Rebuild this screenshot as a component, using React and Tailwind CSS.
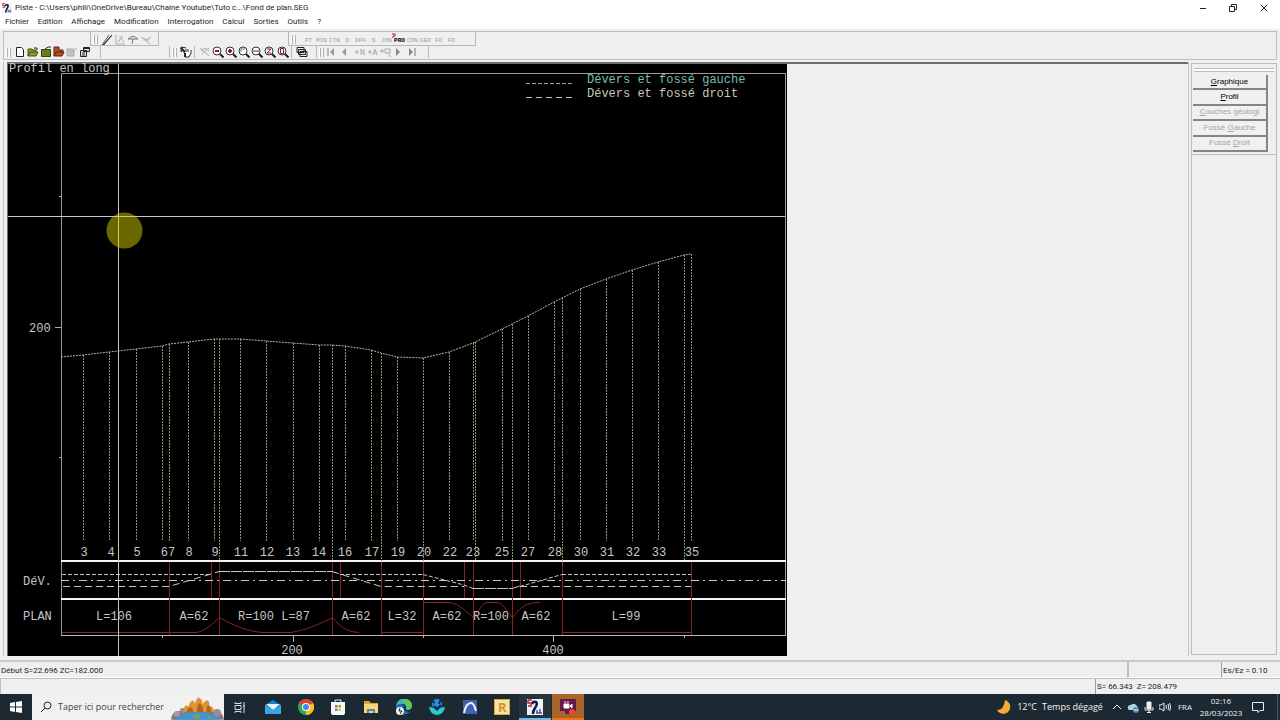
import React from 'react'

const menus = ['Fichier', 'Edition', 'Affichage', 'Modification', 'Interrogation', 'Calcul', 'Sorties', 'Outils', '?'];

const codes = ['PT', 'MIN', 'CTN', 'D', 'DPA', 'S', 'JON', 'PRO', 'CON', 'GEO', 'FO', 'FD'];

// x, y of the ground line at each cross section
const ground = [
  [83, 355], [109, 352], [136, 349], [162, 346], [169, 344], [188, 342], [214, 339], [219, 339],
  [240, 339], [266, 341], [293, 343], [319, 345], [332, 345], [345, 346], [371, 350], [381, 353],
  [397, 357], [423, 358], [449, 352], [473, 343], [475, 342], [502, 329], [512, 324], [528, 316],
  [554, 302], [562, 298], [580, 289], [606, 279], [632, 270], [658, 262], [684, 255], [691, 254],
];

// sections whose line goes down to the frame
const longSections = [219, 332, 381, 423, 475, 512, 562, 684];

const sectionLabels = [
  ['3', 84], ['4', 111], ['5', 137], ['67', 168], ['8', 189], ['9', 215], ['11', 241], ['12', 267],
  ['13', 293], ['14', 319], ['16', 345], ['17', 372], ['19', 398], ['20', 424], ['22', 450],
  ['23', 473], ['25', 502], ['27', 528], ['28', 555], ['30', 581], ['31', 607], ['32', 633],
  ['33', 659], ['35', 692],
];

const planLabels = [
  ['L=106', 114], ['A=62', 194], ['R=100 L=87', 274], ['A=62', 356], ['L=32', 402],
  ['A=62', 447], ['R=100', 491], ['A=62', 536], ['L=99', 626],
];

function Profile() {
  return (
    <svg
      viewBox="8 64 779 592"
      className="h-full w-auto shrink-0 overflow-visible bg-black font-['Liberation_Mono','Courier_New',monospace] text-[12px]"
      role="img"
      aria-label="Profil en long"
    >
      <g fill="none" shapeRendering="crispEdges">
        <path d="M61.5 636V73.5H785.5V636" stroke="#9a9a9a" />
        <path d="M61 635.5H786" stroke="#b8b8b8" />
        <path d="M61 561H786M61 599H786" stroke="#f4f4f4" strokeWidth="2" />
        <path d="M55 327.5H61M293.5 636V642M553.5 636V642M162.5 636V638M423.5 636V638M684.5 636V638M59 196.5H61M59 457.5H61" stroke="#b0b0b0" />
      </g>

      <g fill="none" stroke="#789c6a" strokeDasharray="2 1" shapeRendering="crispEdges">
        {ground.map(([x, y]) => (
          <path key={x} d={`M${x + 0.5} ${y}V${longSections.includes(x) ? 561 : 541}`} />
        ))}
      </g>
      <polyline
        points={'61,357 ' + ground.map((p) => p.join(',')).join(' ')}
        fill="none" stroke="#acbca0" strokeDasharray="2 1"
      />

      <g fill="none" stroke="#8c2222">
        <path d="M169.5 562V635M219.5 562V635M332.5 562V635M381.5 562V635M423.5 562V635M473.5 562V635M512.5 562V635M562.5 562V635M691.5 562V635" />
        <path d="M211.5 562V598M340.5 562V598M464.5 562V598M520.5 562V598" />
        <path d="M62 632.5H196C206 631 212 624 219.5 617.5C236 627 248 631 262 632.5H291C306 630 318 625 332.5 617.5C340 626 346 632 359 632.5M382 632.5H423M562 632.5H691" />
        <path d="M423 602.5H450C460 604 466 612 473.5 617.5C479 611 482 603 487 602.5H497C503 603 507 611 512.5 617.5C520 609 524 602 540 602.5" />
      </g>

      <g fill="none" stroke="#c4ccc4">
        <path d="M62 574.5H211M340 574.5H423M562 574.5H691" strokeDasharray="4 2" />
        <path d="M423 574.5L464 585L473 588.5M520 586.5L562 574.5" strokeDasharray="4 2" />
        <path d="M63 586.5H169L211 574L219 571.5M332 571.5L340 574L381 586.5H464M520 586.5H691" strokeDasharray="7 4" />
        <path d="M219 571.5H332M473 588.5H512L520 586" strokeDasharray="11 1" />
        <path d="M61 580.5H786" strokeDasharray="8 4 2 4" />
      </g>

      <path d="M526 83.5H573" stroke="#8ab0a8" strokeDasharray="4 2" />
      <path d="M526 97.5H573" stroke="#c8c8c8" strokeDasharray="6 4" />
      <text x="587" y="83" fill="#78bdb4">Dévers et fossé gauche</text>
      <text x="587" y="97" fill="#c8c8bc">Dévers et fossé droit</text>

      <g fill="#c6c6c6">
        <text x="9" y="72">Profil en long</text>
        <text x="29" y="332">200</text>
        <text x="23" y="585">DéV.</text>
        <text x="23" y="620">PLAN</text>
        <g textAnchor="middle">
          <text x="292" y="654">200</text>
          <text x="553" y="654">400</text>
          {sectionLabels.map(([label, x]) => <text key={x} x={x} y="556">{label}</text>)}
          {planLabels.map(([label, x]) => <text key={x} x={x} y="620">{label}</text>)}
        </g>
      </g>

      <circle cx="124.5" cy="230.5" r="18" fill="#6a6600" />
      <path d="M8 216.5H785M118.5 64V656" stroke="#c8c8c0" shapeRendering="crispEdges" />
      <path d="M114 216.5H135M118.5 213V248" stroke="#d2ce62" shapeRendering="crispEdges" />
    </svg>
  );
}

function AppLogo({ className }) {
  return (
    <svg viewBox="0 0 16 16" className={className} aria-hidden="true">
      <path d="M0 0H16V16H0Z" fill="#eef0fa" />
      <path d="M5 5Q6 2 9 3Q11 5 8 9Q6 12 6 15" fill="none" stroke="#15153c" strokeWidth="2.500" />
      <path d="M1 1H5M1 1V4H4V7H1" fill="none" stroke="#c2203a" strokeWidth="1.500" />
      <path d="M10 14V11M13 14V10M9 14H15" stroke="#4a56a8" strokeWidth="1.500" />
    </svg>
  );
}

function Grip({ className = 'mr-[2px]' }) {
  return (
    <span className={`ml-[2px] flex h-[9px] w-[5px] shrink-0 justify-between self-center ${className}`}>
      <span className="w-[2px] border-r border-[#b0b0b0] bg-white" />
      <span className="w-[2px] border-r border-[#b0b0b0] bg-white" />
    </span>
  );
}

function Tool({ label, children }) {
  return (
    <button type="button" aria-label={label} className="flex h-3 w-[13px] shrink-0 items-center justify-center">
      <svg viewBox="0 0 12 12" className="h-3 w-3" fill="none" stroke="#222">
        {children}
      </svg>
    </button>
  );
}

function ZoomTool({ label, children }) {
  return (
    <Tool label={label}>
      <circle cx="5" cy="5" r="4" fill="#fff" stroke="#333" />
      <path d="M8 8L11.500 11.500" stroke="#222" strokeWidth="2" />
      <g stroke="#8c1c30">{children}</g>
    </Tool>
  );
}

function Toolbars() {
  return (
    <div className="mx-[3px] mt-[2px] h-[29px] shrink-0 border border-[#bdbdbd] bg-[#efefef]">
      <div className="flex h-[14px]">
        <div className="w-[87px] border-r border-[#b8b8b8]" />
        <div className="flex w-[68px] items-center border-r border-b border-[#b8b8b8] pt-[2px]">
          <Grip />
          <Tool label="Axe"><path d="M1 11L8 1M3 11L10 2" stroke="#555" /><path d="M2 11L11 1" /></Tool>
          <Tool label="Profil"><path d="M2 1V10H11M4 8L7 4L10 8M5 3H9" stroke="#aaa" /></Tool>
          <Tool label="Courbe"><path d="M1 5Q6 0 11 5H1M6 5L5 10" stroke="#777" /></Tool>
          <Tool label="Raccord"><path d="M1 3L6 6L11 3M5 6L10 10M3 6H9" stroke="#aaa" /></Tool>
        </div>
        <div className="w-[130px] border-r border-[#b8b8b8]" />
        <div className="flex w-[187px] items-center border-r border-b border-[#b8b8b8] pt-[2px]">
          <Grip className="mr-[6px]" />
          {codes.map((code) => (
            <button
              key={code}
              type="button"
              className={code === 'PRO'
                ? "relative w-[13px] shrink-0 pt-[2px] text-center font-['Liberation_Mono',monospace] text-[6px] leading-[6px] font-bold text-black"
                : "relative w-[13px] shrink-0 pt-[2px] text-center font-['Liberation_Mono',monospace] text-[6px] leading-[6px] text-[#9c9c9c]"}
            >
              {code}
              {code === 'PRO' && (
                <svg viewBox="0 0 4 5" className="absolute -top-[3px] -left-px h-[5px] w-1" aria-hidden="true">
                  <path d="M0 1H3V3H1V5" fill="none" stroke="#b0203a" />
                </svg>
              )}
            </button>
          ))}
        </div>
      </div>
      <div className="flex h-3">
        <div className="flex w-[97px] items-center border-r border-[#b8b8b8]">
          <Grip />
          <Tool label="Nouveau"><path d="M2.500 1.500H7.500L9.500 3.500V10.500H2.500Z" fill="#fff" /></Tool>
          <Tool label="Ouvrir"><path d="M1 10V3H5L6 4H9V6M1 10L3 6H11L9 10Z" fill="#8c9c2c" stroke="#4a5210" /><path d="M7 2H10V4" /></Tool>
          <Tool label="Dossier"><path d="M1.500 3.500H10.500V10.500H1.500Z" fill="#6c7c18" stroke="#3c4410" /><path d="M5 3L8 1H11" /></Tool>
          <Tool label="Fermer"><path d="M1 10V1H6V4H10V6M1 10L3 6H11L9 10Z" fill="#b05020" stroke="#64200c" /></Tool>
          <Tool label="Enregistrer"><path d="M1 3H8V10H1ZM5 7L11 2" fill="#c4c4c4" stroke="#aaa" /></Tool>
          <Tool label="Propriétés"><path d="M4.500 1.500H10.500V5.500H4.500ZM1.500 4.500H7.500V10.500H1.500ZM3 7H6M3 9H6" fill="#ddd" /><path d="M5 2H10" strokeWidth="2" /></Tool>
        </div>
        <div className="w-[69px] border-r border-[#b8b8b8]" />
        <div className="flex w-[25px] items-center border-r border-[#b8b8b8]">
          <Grip />
          <Tool label="Sélection"><path d="M1 1V6L3 4L5 8V11H9L11 7V4M1 1L6 2M6 3V6M8 3V6" fill="#fff" /><path d="M1 2L5 6M5 7V11" strokeWidth="2" /></Tool>
        </div>
        <div className="flex w-[97px] items-center border-r border-[#b8b8b8] pl-[3px]">
          <Tool label="Redessiner"><path d="M1 2L10 10M3 8L10 2M2 5Q6 0 10 5" stroke="#aaa" /></Tool>
          <ZoomTool label="Zoom arrière"><path d="M3 5H7" strokeWidth="2" /></ZoomTool>
          <ZoomTool label="Zoom avant"><path d="M3 5H7M5 3V7" strokeWidth="2" /></ZoomTool>
          <ZoomTool label="Zoom fenêtre"><path d="M3 6V3H7" stroke="#777" /></ZoomTool>
          <ZoomTool label="Zoom horizontal"><path d="M2 5H8" /></ZoomTool>
          <ZoomTool label="Zoom vertical"><path d="M3 3H7L3 7H7" /></ZoomTool>
          <ZoomTool label="Zoom page"><path d="M3.500 2.500H6.500V7.500H3.500Z" /></ZoomTool>
        </div>
        <div className="flex w-[25px] items-center justify-center border-r border-[#b8b8b8] pr-1">
          <Tool label="Calques">
            <path d="M4 5.500H11V10.500H4ZM2.500 3.500H9.500V8.500H2.500ZM1 1.500H8V6.500H1Z" fill="#efefef" />
          </Tool>
        </div>
        <div className="flex w-[112px] items-center border-r border-[#b8b8b8]">
          <Grip className="" />
          <Tool label="Premier"><path d="M3 2V10" stroke="#888" /><path d="M9 2L5 6L9 10Z" fill="#999" stroke="none" /></Tool>
          <Tool label="Précédent"><path d="M8 2L4 6L8 10Z" fill="#999" stroke="none" /></Tool>
          <span className="w-[3px]" />
          <Tool label="Numéro"><path d="M1 6H5M3 4V8M7 9V3L10 9V3" stroke="#aaa" /></Tool>
          <Tool label="Abscisse"><path d="M1 6H5M3 4V8M6 9L8 3L10 9M7 7H10" stroke="#aaa" /></Tool>
          <Tool label="Cible"><path d="M0 5H4M2 3V7M5 3H10V7H5ZM8 7L11 11" stroke="#aaa" /></Tool>
          <Tool label="Suivant"><path d="M3 2L7 6L3 10Z" fill="#888" stroke="none" /></Tool>
          <Tool label="Dernier"><path d="M3 2L7 6L3 10Z" fill="#888" stroke="none" /><path d="M9 2V10" stroke="#777" /></Tool>
        </div>
      </div>
    </div>
  );
}

function SidePanel() {
  const enabled = "border-r-2 border-b-2 border-[#858585] bg-[#f0f0f0] text-black";
  const disabled = "border-r-2 border-b-2 border-[#858585] bg-[#f0f0f0] text-[#a4a4a4]";
  return (
    <aside className="mt-px mr-[3px] mb-[1px] w-[86px] shrink-0 border border-[#bcbcbc] font-['Liberation_Sans',Arial,sans-serif] text-[8px] leading-[12px]">
      <div className="mx-[2px] mt-1 h-1 border-y border-[#bcbcbc] bg-white" />
      <div className="mt-[3px] ml-px grid h-[77px] w-[75px] grid-rows-5">
        <button type="button" className={enabled}><u>G</u>raphique</button>
        <button type="button" className={enabled}><u>P</u>rofil</button>
        <button type="button" disabled className={disabled}><u>C</u>ouches géologi</button>
        <button type="button" disabled className={disabled}>Fossé <u>G</u>auche</button>
        <button type="button" disabled className={disabled}>Fossé <u>D</u>roit</button>
      </div>
      <div className="mt-[2px] border-t border-[#bcbcbc]" />
    </aside>
  );
}

function TaskButton({ label, className = '', children }) {
  return (
    <button type="button" aria-label={label} className={`flex h-full w-8 items-center justify-center ${className}`}>
      {children}
    </button>
  );
}

function Taskbar() {
  return (
    <footer className="flex h-[26px] shrink-0 items-stretch bg-[#1c2932] font-['Open_Sans','Noto_Sans',sans-serif] text-[9px] text-[#f0f0f0]">
      <TaskButton label="Démarrer">
        <svg viewBox="0 0 12 12" className="h-3 w-3" fill="#fff"><path d="M0 2L5 1V5.500H0ZM6 1L12 0V5.500H6ZM0 6.500H5V11L0 10ZM6 6.500H12V12L6 11Z" /></svg>
      </TaskButton>
      <label className="flex w-48 items-center bg-[#f1f1f1] pl-2">
        <svg viewBox="0 0 12 12" className="h-3 w-3 shrink-0" fill="none" stroke="#222"><circle cx="7.500" cy="4.500" r="3.500" /><path d="M5 7L1 11" /></svg>
        <input
          type="text"
          aria-label="Rechercher"
          placeholder="Taper ici pour rechercher"
          className="ml-[6px] w-[113px] min-w-0 text-[9px] text-[#333] outline-none placeholder:text-[#444]"
        />
        <svg viewBox="0 0 54 26" className="h-[26px] w-[53px] shrink-0" aria-hidden="true">
          <path d="M0 26Q1 17 8 17H46Q53 18 54 26Z" fill="#7f7883" />
          <circle cx="6" cy="20" r="3" fill="#a49aa5" /><circle cx="12" cy="17" r="3" fill="#918894" />
          <circle cx="47" cy="19" r="4" fill="#968c98" />
          <path d="M3 26Q12 18 27 18T50 26Z" fill="#3b96d2" />
          <path d="M20 23L27 20L31 23L26 25ZM36 21L42 23L39 25Z" fill="#8a9c54" />
          <path d="M13 18Q12 13 16 11Q18 12 18 14Q18 8 22 6Q25 8 24 12Q25 5 28 3Q33 6 32 11Q33 7 37 6Q40 8 39 12Q43 11 44 18Z" fill="#e09330" />
          <path d="M16 18Q17 13 20 13Q22 14 23 18ZM26 18Q27 10 29 9Q33 12 33 18ZM36 18Q36 13 38 11Q41 14 41 18Z" fill="#b06424" />
        </svg>
      </label>
      <nav className="flex w-[360px] justify-between">
        <TaskButton label="Vue des tâches">
          <svg viewBox="0 0 12 12" className="h-3 w-3" fill="none" stroke="#d8dde0"><path d="M1 1V2.500H7V1M1 4.500H7V8.500H1ZM1 12V10.500H7V12M10 1V12M9 5H11" /></svg>
        </TaskButton>
        <TaskButton label="Courrier">
          <svg viewBox="0 0 16 16" className="h-4 w-4"><path d="M0 6L8 1L16 6V15H0Z" fill="#1484cc" /><path d="M1 5H15L8 11Z" fill="#e6f3fb" /><path d="M0 6L8 11L16 6V15H0Z" fill="#36a5e4" /></svg>
        </TaskButton>
        <TaskButton label="Chrome">
          <svg viewBox="0 0 16 16" className="h-4 w-4"><circle cx="8" cy="8" r="8" fill="#33a852" /><path d="M8 8L1.100 4A8 8 0 0 1 15 4Z" fill="#e44134" /><path d="M8 8L15 4A8 8 0 0 1 8 16Z" fill="#fbc116" /><circle cx="8" cy="8" r="4" fill="#fff" /><circle cx="8" cy="8" r="3" fill="#4285f4" /></svg>
        </TaskButton>
        <TaskButton label="Microsoft Store">
          <svg viewBox="0 0 16 16" className="h-4 w-4"><path d="M5 4V1H11V4" fill="none" stroke="#e4eef4" /><path d="M1 3H15V14Q15 16 13 16H3Q1 16 1 14Z" fill="#f4f8fa" /><path d="M5 6H7.500V8.500H5Z" fill="#ea4c2c" /><path d="M8.500 6H11V8.500H8.500Z" fill="#7cb420" /><path d="M5 9.500H7.500V12H5Z" fill="#24a0e0" /><path d="M8.500 9.500H11V12H8.500Z" fill="#f8b810" /></svg>
        </TaskButton>
        <TaskButton label="Explorateur">
          <svg viewBox="0 0 16 16" className="h-4 w-4"><path d="M1 2H6L8 4H15V14H1Z" fill="#e4a42c" /><path d="M1 5H15V14H1Z" fill="#fbd772" /><path d="M4 14V10H12V14H10V12H6V14Z" fill="#3c8cd0" /></svg>
        </TaskButton>
        <TaskButton label="Edge">
          <svg viewBox="0 0 16 16" className="h-4 w-4"><path d="M0 8A8 8 0 0 1 16 7Q16 11 11 11Q9 10 10 8Q9 4 5 5Q1 6 0 8Z" fill="#38b8c4" /><path d="M8 0Q16 0 16 7Q15 11 11 11Q12 4 5 2Z" fill="#5cc858" /><path d="M0 8Q3 3 8 6Q5 12 14 13Q11 16 7 16Q0 15 0 8Z" fill="#1868bc" /><circle cx="4" cy="12" r="4" fill="#f0f0f0" /><path d="M4 9L3 12H6L4 15" fill="none" stroke="#222" /></svg>
        </TaskButton>
        <TaskButton label="Topographie">
          <svg viewBox="0 0 16 16" className="h-4 w-4"><circle cx="8" cy="5" r="5" fill="#2a8fd0" /><path d="M8 16Q1 15 0 8Q5 8 8 12Q11 8 16 8Q15 15 8 16Z" fill="#25cbd1" /><path d="M1 1L6 4M12 0L10 5M5 7L8 10L12 6" fill="none" stroke="#10245c" strokeWidth="2" /></svg>
        </TaskButton>
        <TaskButton label="Courbes">
          <svg viewBox="0 0 16 16" className="h-4 w-4"><path d="M1 1H15V15H1Z" fill="#3c62b0" /><path d="M2 14Q4 4 9 4Q12 4 14 12" fill="none" stroke="#eef4ff" strokeWidth="2" /></svg>
        </TaskButton>
        <TaskButton label="Robot">
          <span className="flex h-4 w-4 items-center justify-center border border-[#dca83c] bg-[#f6e3ac] text-[13px] leading-none font-bold text-[#d4941c]">R</span>
        </TaskButton>
        <TaskButton label="Piste" className="border-b-2 border-[#76b9ed] bg-[#25333d] pt-[2px]"><AppLogo className="h-4 w-4" /></TaskButton>
        <TaskButton label="Enregistreur" className="border-b-2 border-[#f07410] bg-[#a9642c] pt-[2px]">
          <svg viewBox="0 0 16 16" className="h-4 w-4"><path d="M0 0H16V12H0ZM5 12H11V15H5Z" fill="#681848" /><path d="M4 5H9V9H4ZM10 7L12 5V9Z" fill="#fff" stroke="#fff" /><path d="M4 3H9" stroke="#fff" strokeDasharray="2 1" /><circle cx="12" cy="13" r="3" fill="#f04438" /></svg>
        </TaskButton>
      </nav>
      <div className="ml-auto flex items-center">
        <button type="button" className="mr-[6px] flex items-center gap-[5px]">
          <svg viewBox="0 0 16 16" className="h-4 w-4"><path d="M9 1A7 7 0 1 1 1 11Q8 11 9 1Z" fill="#f3ad35" /></svg>
          <span>12°C</span>
          <span className="w-[61px] whitespace-nowrap">Temps dégagé</span>
        </button>
        <button type="button" aria-label="Icônes cachées" className="flex w-4 justify-center">
          <svg viewBox="0 0 10 10" className="h-[10px] w-[10px]" fill="none" stroke="#fff"><path d="M1 7L5 3L9 7" /></svg>
        </button>
        <button type="button" aria-label="OneDrive" className="flex w-4 justify-center">
          <svg viewBox="0 0 12 12" className="h-3 w-3"><path d="M1 8Q0 4 4 4Q7 1 10 5Q12 7 10 9H2Z" fill="#b9cedc" /><circle cx="9" cy="9" r="3" fill="#4c8cbc" /><path d="M7 9H11" stroke="#fff" /></svg>
        </button>
        <button type="button" aria-label="Micro" className="flex w-4 justify-center">
          <svg viewBox="0 0 12 12" className="h-3 w-3" fill="none" stroke="#eee"><path d="M4 1H8V8H4Z" fill="#eee" /><path d="M2 6V9H10V6M6 9V11M4 11.500H8" /></svg>
        </button>
        <button type="button" aria-label="Volume" className="flex w-4 justify-center">
          <svg viewBox="0 0 12 12" className="h-3 w-3" fill="none" stroke="#eee"><path d="M0 4H2L5 2V10L2 8H0ZM7 4Q8 6 7 8M9 3Q10.500 6 9 9M10.500 2Q13 6 10.500 10" /></svg>
        </button>
        <button type="button" className="w-6 text-center text-[8px]">FRA</button>
        <time className="w-12 text-center text-[8px] leading-[12px]">02:16<br />28/03/2023</time>
        <button type="button" aria-label="Notifications" className="flex w-[26px] justify-center">
          <svg viewBox="0 0 12 12" className="h-3 w-3" fill="none" stroke="#eee"><path d="M0.500 1.500H11.500V9.500H8L6 11.500V9.500H0.500Z" /></svg>
        </button>
        <span className="mr-[2px] ml-[6px] h-[26px] w-px bg-[#4c5860]" />
      </div>
    </footer>
  );
}

function App() {
  return (
    <div className="flex h-screen flex-col overflow-hidden bg-[#efefef] font-['Roboto','Open_Sans',sans-serif] text-[8px] text-[#1c1c1c]">
      <header className="shrink-0 bg-white">
        <div className="flex h-[15px] items-center pl-[2px]">
          <AppLogo className="h-[10px] w-[10px]" />
          <h1 className="ml-[3px] text-[8px] leading-[14px]">Piste - C:\Users\phili\OneDrive\Bureau\Chaine Youtube\Tuto c...\Fond de plan.SEG</h1>
          <div className="ml-auto flex">
            <button type="button" aria-label="Réduire" className="flex w-[31px] justify-center"><svg viewBox="0 0 8 8" className="h-2 w-2"><path d="M1 4.500H7" stroke="#222" /></svg></button>
            <button type="button" aria-label="Restaurer" className="flex w-[30px] justify-center"><svg viewBox="0 0 8 8" className="h-2 w-2" fill="none" stroke="#222"><path d="M0.500 2.500H5.500V7.500H0.500ZM2.500 2V0.500H7.500V5.500H6" /></svg></button>
            <button type="button" aria-label="Fermer" className="flex w-8 justify-center"><svg viewBox="0 0 8 8" className="h-2 w-2" stroke="#222"><path d="M1 1L7 7M7 1L1 7" /></svg></button>
          </div>
        </div>
        <nav className="flex h-[14px] items-center gap-[9px] pl-[5px] text-[8px]">
          {menus.map((name) => <button key={name} type="button">{name}</button>)}
        </nav>
      </header>
      <Toolbars />
      <main className="mt-[2px] flex min-h-0 flex-1">
        <div className="ml-[3px] flex min-w-0 flex-1 border-x border-[#c4c4c4] pl-[3px]">
          <div className="flex min-w-0 flex-1 border-t-2 border-l border-[#6e6e6e] bg-[#efefef]">
            <Profile />
          </div>
        </div>
        <div className="w-[2px] shrink-0" />
        <SidePanel />
      </main>
      <div className="mt-1 flex h-[18px] shrink-0 border-t-2 border-[#cacaca] text-[8px] leading-[18px]">
        <p className="flex-1 border-b border-white pl-[1px]">Début S=22.696 ZC=182.000</p>
        <p className="w-[94px] border-b border-l-2 border-b-white border-l-[#bebebe]" />
        <p className="w-[59px] border-b border-l border-b-white border-l-[#9e9e9e] pl-[1px]">Es/Ez = 0.10</p>
      </div>
      <div className="flex h-4 shrink-0 border-t border-[#bebebe] text-[8px] leading-4">
        <p className="flex-1 border-l border-[#bebebe]" />
        <p className="w-[185px] border-l border-[#9e9e9e] pl-[1px] whitespace-pre">S= 66.343  Z= 208.479</p>
      </div>
      <Taskbar />
    </div>
  );
}

export default App;
